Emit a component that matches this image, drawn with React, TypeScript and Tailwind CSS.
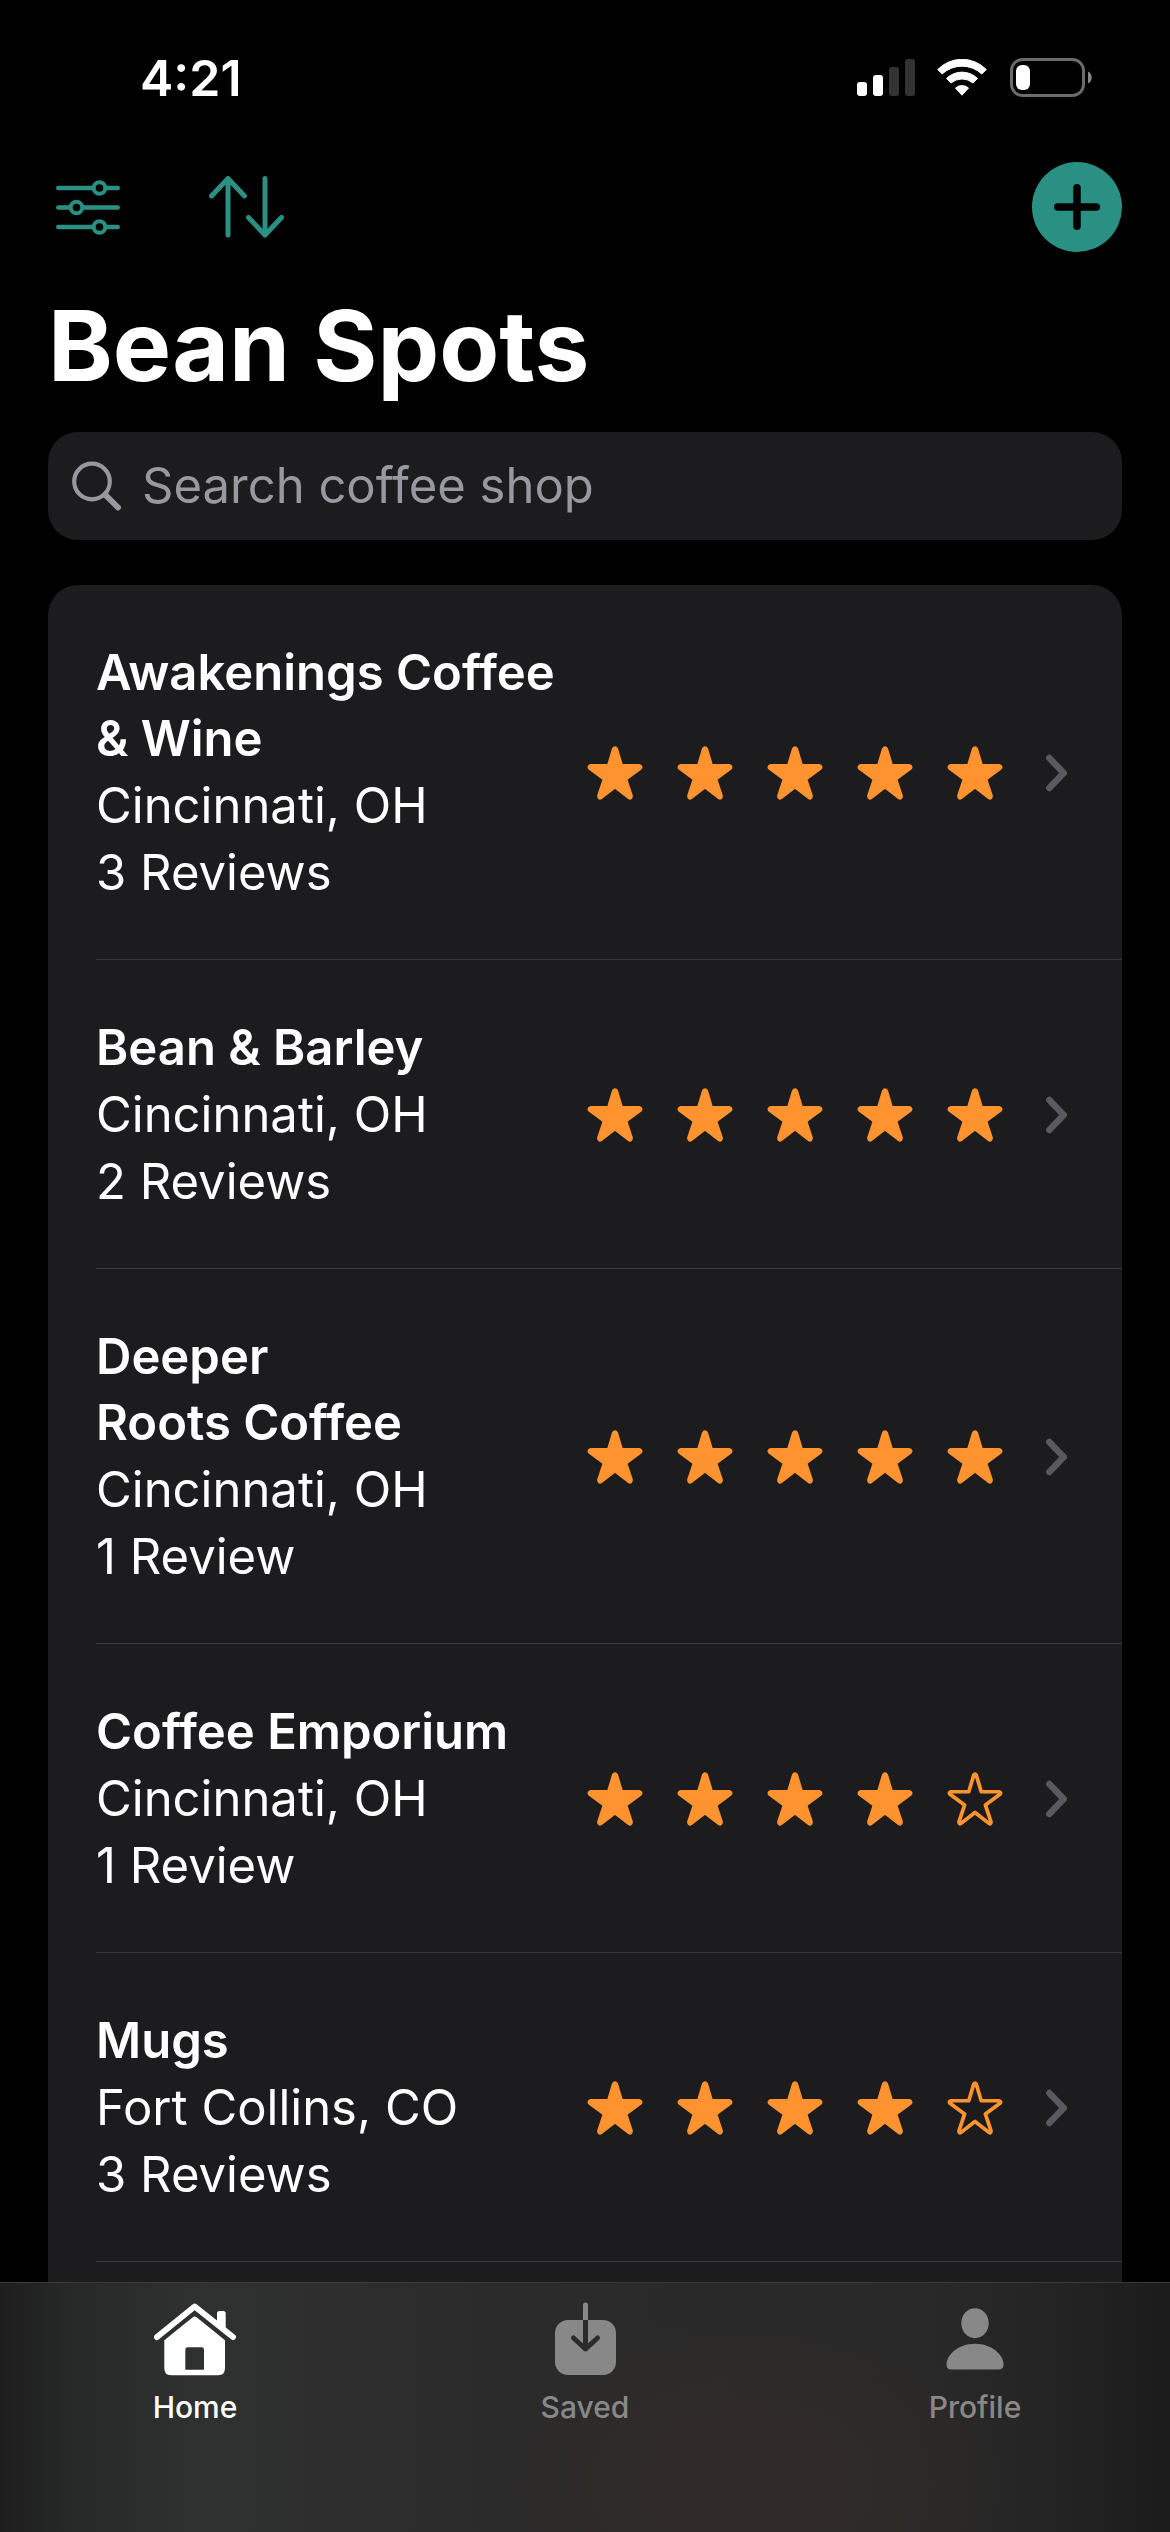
import { useState } from 'react';

interface Shop {
    name: string;
    city: string;
    reviews: number;
    rating: number;
}

const SHOPS: Shop[] = [
    { name: 'Awakenings Coffee & Wine', city: 'Cincinnati, OH', reviews: 3, rating: 5 },
    { name: 'Bean & Barley', city: 'Cincinnati, OH', reviews: 2, rating: 5 },
    // non-breaking space keeps "Roots Coffee" together
    { name: 'Deeper Roots\u00a0Coffee', city: 'Cincinnati, OH', reviews: 1, rating: 5 },
    { name: 'Coffee Emporium', city: 'Cincinnati, OH', reviews: 1, rating: 4 },
    { name: 'Mugs', city: 'Fort Collins, CO', reviews: 3, rating: 4 },
];

function StatusBar() {
    return (
        <div className="flex items-center justify-between h-[156px] pl-[140px] pr-[78px]">
            <span className="text-[50px] leading-[60px] font-semibold">4:21</span>

            <div className="flex items-center">
                <svg className="w-[58px] h-[38px]" viewBox="0 0 58 38" aria-hidden="true">
                    <rect x="0" y="23" width="10" height="14" rx="3" fill="#fff" />
                    <rect x="16" y="16" width="10" height="21" rx="3" fill="#fff" />
                    <rect x="32" y="8" width="10" height="29" rx="3" fill="#333" />
                    <rect x="48" y="0" width="10" height="37" rx="3" fill="#333" />
                </svg>
                <svg className="w-[50px] h-[38px] ml-[22px]" viewBox="0 0 50 38" fill="#fff" stroke="#fff" strokeWidth="1" strokeLinejoin="round" aria-hidden="true">
                    <path d="M.7 10.5A34 34 0 0 1 49.3 10.5L44.8 15A29 29 0 0 0 5.2 15Z" />
                    <path d="M9.5 19.5A22 22 0 0 1 40.5 19.5L36 24A17 17 0 0 0 14 24Z" />
                    <path d="M18.5 29A10 10 0 0 1 31.5 29L25 36.2Z" />
                </svg>
                <svg className="w-[82px] h-[40px] ml-[23px]" viewBox="0 0 82 40" aria-hidden="true">
                    <rect x="1.5" y="1.5" width="72" height="36" rx="11" fill="none" stroke="#6b6b6b" strokeWidth="3" />
                    <rect x="6" y="7" width="14" height="25" rx="6" fill="#fff" />
                    <path d="M78 13.5C83 15.5 83 23.5 78 25.5Z" fill="#868686" />
                </svg>
            </div>
        </div>
    );
}

function Toolbar() {
    return (
        <div className="flex items-center mt-1.5 pl-14 pr-12 text-[#2a9084]">
            <button type="button" aria-label="Filter">
                <svg className="w-16 h-[62px]" viewBox="0 0 64 62" fill="none" stroke="currentColor" strokeWidth="4.5" strokeLinecap="round">
                    <path d="M2.3 12H37M50 12H61.7M2.3 31.5H14M27 31.5H61.7M2.3 51H37M50 51H61.7" />
                    <circle cx="43.5" cy="12" r="5.8" strokeWidth="4" />
                    <circle cx="20.5" cy="31.5" r="5.8" strokeWidth="4" />
                    <circle cx="43.5" cy="51" r="5.8" strokeWidth="4" />
                </svg>
            </button>
            <button type="button" aria-label="Sort" className="ml-[89px]">
                <svg className="w-[75px] h-[62px]" viewBox="0 0 75 62" fill="none" stroke="currentColor" strokeWidth="5" strokeLinecap="round" strokeLinejoin="round">
                    <path d="M19 59V2.5M2.5 20L19 2.5L35.5 20" />
                    <path d="M56 2.5V59M39.5 41.5L56 59L72.5 41.5" />
                </svg>
            </button>
            <button type="button" aria-label="Add coffee shop" className="ml-auto flex items-center justify-center size-[90px] rounded-full bg-[#2a9084]">
                <svg className="size-[46px]" viewBox="0 0 46 46" fill="none" stroke="#000" strokeWidth="7.5" strokeLinecap="round">
                    <path d="M23 3.75V42.25M3.75 23H42.25" />
                </svg>
            </button>
        </div>
    );
}

function Star({ filled }: { filled: boolean }) {
    return (
        <svg
            className="w-14 h-[54px]"
            viewBox="-2 -2 60 58"
            fill={filled ? 'currentColor' : 'none'}
            stroke="currentColor"
            strokeWidth="4"
            strokeLinejoin="round"
            aria-hidden="true"
        >
            <path d="M26.6 1.5Q28 -1 29.4 1.5L34.7 19.2H53.6Q56.6 20 54.8 22L39.2 33.5L45.2 51.5Q45.3 54.5 43 53.2L28 41.5L13 53.2Q10.7 54.5 10.8 51.5L16.8 33.5L1.2 22Q-.6 20 2.4 19.2H21.3Z" />
        </svg>
    );
}

function ShopRow({ shop }: { shop: Shop }) {
    return (
        <li className="pl-12">
            <a href="#" className="flex items-center pt-[55px] pb-[53px] pr-[55px] border-b border-[#3b3b3d]">
                <div className="flex-1 min-w-0 pr-4 text-[49px] leading-[67px]">
                    <h2 className="leading-[66px] font-semibold">{shop.name}</h2>
                    <p>{shop.city}</p>
                    <p>{shop.reviews} {shop.reviews === 1 ? 'Review' : 'Reviews'}</p>
                </div>
                <div className="flex gap-[34px] text-[#ff9330]" role="img" aria-label={`${shop.rating} out of 5 stars`}>
                    {[1, 2, 3, 4, 5].map((n) => (
                        <Star key={n} filled={n <= shop.rating} />
                    ))}
                </div>
                <svg className="w-[21px] h-[42px] ml-[43px]" viewBox="0 0 21 42" fill="none" stroke="#5a5a5e" strokeWidth="6.5" strokeLinecap="round" strokeLinejoin="round" aria-hidden="true">
                    <path d="M3.3 6L17.7 21L3.3 36" />
                </svg>
            </a>
        </li>
    );
}

function HomeIcon() {
    return (
        <svg className="w-[82px] h-[73px]" viewBox="0 0 82 73" fill="currentColor" aria-hidden="true">
            <path d="M3 34L40.7 3.5L79 34" fill="none" stroke="currentColor" strokeWidth="6" strokeLinecap="round" strokeLinejoin="round" />
            <path d="M63 20V10.5Q63 8 65.5 8H69.2Q71.7 8 71.7 10.5V27Z" />
            <path fillRule="evenodd" d="M38.8 14.2Q40.7 12.7 42.6 14.2L71 37.2V65.3Q71 72.3 64 72.3H17.3Q10.3 72.3 10.3 65.3V37.2ZM31.3 46.5V66.7H50V46.5Q50 44.2 47.7 44.2H33.6Q31.3 44.2 31.3 46.5Z" />
        </svg>
    );
}

function SavedIcon() {
    return (
        <svg className="w-[61px] h-[74px]" viewBox="0 0 61 74" fill="none" strokeLinecap="round" strokeLinejoin="round" aria-hidden="true">
            <path d="M30.5 3V20" stroke="currentColor" strokeWidth="5" />
            <rect y="18" width="61" height="55" rx="13" fill="currentColor" />
            <path d="M28 18H33V40H28Z" fill="#2b2b2b" />
            <path d="M30.5 30V47M18.5 36L30.5 47L42.5 36" stroke="#2b2b2b" strokeWidth="5" />
        </svg>
    );
}

function ProfileIcon() {
    return (
        <svg className="w-[58px] h-[62px]" viewBox="0 0 58 62" fill="currentColor" aria-hidden="true">
            <ellipse cx="29" cy="15.2" rx="13.7" ry="15" />
            <path d="M29 35.7C46 35.7 57.5 47 57.5 56.5Q57.5 61.5 52.5 61.5H5.5Q.5 61.5 .5 56.5C.5 47 12 35.7 29 35.7Z" />
        </svg>
    );
}

const TABS = [
    { label: 'Home', icon: HomeIcon },
    { label: 'Saved', icon: SavedIcon },
    { label: 'Profile', icon: ProfileIcon },
];

function TabBar() {
    const [active, setActive] = useState('Home');

    return (
        <nav className="h-[250px] border-t border-[#3b3c3c] bg-[radial-gradient(ellipse_260px_170px_at_64%_80%,#302b28_0%,#302b28_35%,#302b2800_100%),linear-gradient(90deg,#1e1e1e_0%,#282929_7%,#2f3030_17%,#2d2d2e_32%,#2a2a2a_50%,#292929_78%,#242424_90%,#1b1b1b_100%)]">
            <div className="grid grid-cols-3 pt-[18px]">
                {TABS.map(({ label, icon: Icon }) => (
                    <button
                        key={label}
                        type="button"
                        onClick={() => setActive(label)}
                        className={`flex flex-col items-center ${active === label ? 'text-white' : 'text-[#888888]'}`}
                    >
                        <span className="flex items-center justify-center h-[76px]">
                            <Icon />
                        </span>
                        <span className="mt-3 text-[30px] leading-[36px] font-medium">{label}</span>
                    </button>
                ))}
            </div>
        </nav>
    );
}

export default function App() {
    const [query, setQuery] = useState('');

    return (
        <div className="flex flex-col min-h-screen bg-black text-white font-['Inter',sans-serif]">
            <StatusBar />
            <Toolbar />

            <main className="flex-1 flex flex-col px-12">
                <h1 className="mt-[34px] text-[98px] leading-[120px] font-bold">Bean Spots</h1>

                <label className="flex items-center mt-[26px] h-[108px] px-6 rounded-[30px] bg-[#1c1c1e]">
                    <svg className="size-[50px] shrink-0" viewBox="0 0 50 50" fill="none" stroke="#98989f" strokeLinecap="round" aria-hidden="true">
                        <circle cx="20" cy="20.5" r="17.8" strokeWidth="4.2" />
                        <path d="M34 34.5L46 46.5" strokeWidth="6" />
                    </svg>
                    <input
                        type="search"
                        aria-label="Search coffee shop"
                        placeholder="Search coffee shop"
                        value={query}
                        onChange={(e) => setQuery(e.target.value)}
                        className="flex-1 min-w-0 ml-5 text-[49px] bg-transparent outline-none placeholder:text-[#98989f]"
                    />
                </label>

                <ul className="flex-1 mt-[45px] rounded-t-[30px] bg-[#1c1c1e]">
                    {SHOPS.filter((s) => s.name.toLowerCase().includes(query.toLowerCase())).map((shop) => (
                        <ShopRow key={shop.name} shop={shop} />
                    ))}
                </ul>
            </main>

            <TabBar />
        </div>
    );
}
